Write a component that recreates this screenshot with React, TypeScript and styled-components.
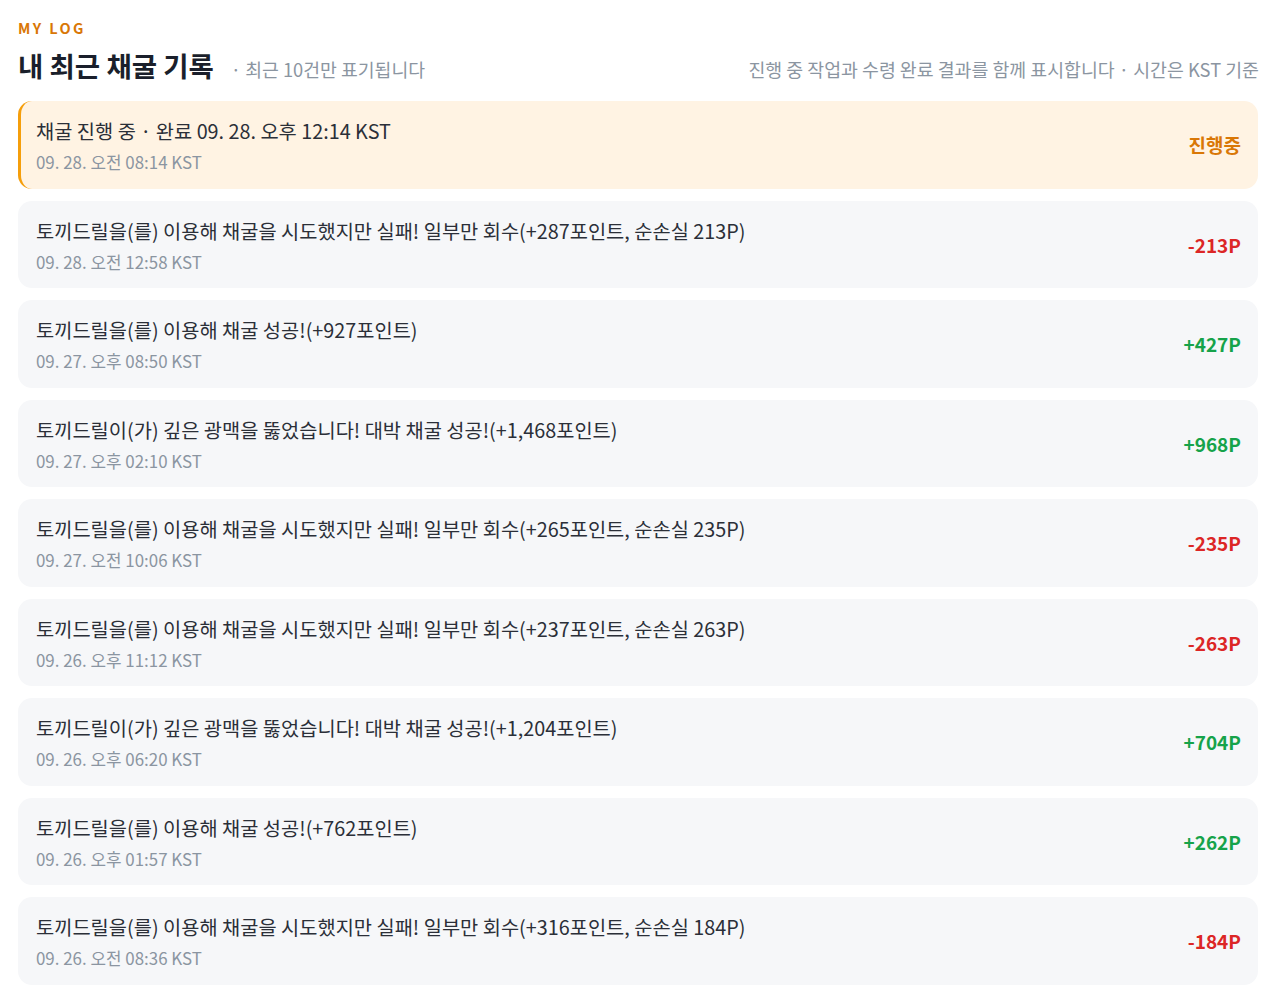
import styled, { createGlobalStyle } from 'styled-components';

const GlobalStyle = createGlobalStyle`
  body {
    margin: 0;
    background: #ffffff;
    font-family: 'Noto Sans CJK KR', 'Noto Sans', sans-serif;
    color: #1f2430;
  }
`;

const Page = styled.main`
  padding: 18px 17px 8px 18px;
`;

const Eyebrow = styled.div`
  font-size: 14.5px;
  font-weight: 700;
  letter-spacing: 2.4px;
  color: #d97706;
  line-height: 20px;
`;

const HeaderRow = styled.header`
  display: flex;
  align-items: baseline;
  justify-content: space-between;
  margin-top: 8px;
  margin-bottom: 17px;
`;

const TitleGroup = styled.div`
  display: flex;
  align-items: baseline;
  gap: 17px;
`;

const Title = styled.h1`
  margin: 0;
  font-size: 27.5px;
  font-weight: 700;
  line-height: 38px;
  color: #1a1f2b;
`;

const Hint = styled.span`
  font-size: 18.3px;
  color: #8b95a1;
`;

const Note = styled.span`
  font-size: 18.35px;
  color: #8b95a1;
  margin-right: -1px;
`;

const List = styled.ul`
  list-style: none;
  margin: 0;
  padding: 0;
  display: flex;
  flex-direction: column;
  gap: 12px;
`;

type Tone = 'pending' | 'gain' | 'loss';

const Card = styled.li<{ $active?: boolean }>`
  display: flex;
  align-items: center;
  justify-content: space-between;
  height: 87.5px;
  box-sizing: border-box;
  padding: 2px 17px 0 ${(p) => (p.$active ? '15px' : '18px')};
  border-radius: 14px;
  background: ${(p) => (p.$active ? '#fff3e3' : '#f6f7f9')};
  border-left: ${(p) => (p.$active ? '3px solid #f59e0b' : 'none')};
`;

const Body = styled.div`
  display: flex;
  flex-direction: column;
  gap: 5px;
`;

const Message = styled.div`
  font-size: 19.8px;
  line-height: 28px;
  color: #2b2f38;
`;

const Stamp = styled.div`
  font-size: 16.9px;
  line-height: 24px;
  color: #8b95a1;
`;

const toneColor: Record<Tone, string> = {
  pending: '#d97706',
  gain: '#16a34a',
  loss: '#dc2626',
};

const Amount = styled.div<{ $tone: Tone }>`
  font-size: 19px;
  font-weight: 700;
  margin-top: -2px;
  color: ${(p) => toneColor[p.$tone]};
`;

type Entry = {
  message: string;
  time: string;
  amount: string;
  tone: Tone;
  active?: boolean;
};

const entries: Entry[] = [
  { message: '채굴 진행 중 · 완료 09. 28. 오후 12:14 KST', time: '09. 28. 오전 08:14 KST', amount: '진행중', tone: 'pending', active: true },
  { message: '토끼드릴을(를) 이용해 채굴을 시도했지만 실패! 일부만 회수(+287포인트, 순손실 213P)', time: '09. 28. 오전 12:58 KST', amount: '-213P', tone: 'loss' },
  { message: '토끼드릴을(를) 이용해 채굴 성공!(+927포인트)', time: '09. 27. 오후 08:50 KST', amount: '+427P', tone: 'gain' },
  { message: '토끼드릴이(가) 깊은 광맥을 뚫었습니다! 대박 채굴 성공!(+1,468포인트)', time: '09. 27. 오후 02:10 KST', amount: '+968P', tone: 'gain' },
  { message: '토끼드릴을(를) 이용해 채굴을 시도했지만 실패! 일부만 회수(+265포인트, 순손실 235P)', time: '09. 27. 오전 10:06 KST', amount: '-235P', tone: 'loss' },
  { message: '토끼드릴을(를) 이용해 채굴을 시도했지만 실패! 일부만 회수(+237포인트, 순손실 263P)', time: '09. 26. 오후 11:12 KST', amount: '-263P', tone: 'loss' },
  { message: '토끼드릴이(가) 깊은 광맥을 뚫었습니다! 대박 채굴 성공!(+1,204포인트)', time: '09. 26. 오후 06:20 KST', amount: '+704P', tone: 'gain' },
  { message: '토끼드릴을(를) 이용해 채굴 성공!(+762포인트)', time: '09. 26. 오후 01:57 KST', amount: '+262P', tone: 'gain' },
  { message: '토끼드릴을(를) 이용해 채굴을 시도했지만 실패! 일부만 회수(+316포인트, 순손실 184P)', time: '09. 26. 오전 08:36 KST', amount: '-184P', tone: 'loss' },
];

export default function App() {
  return (
    <>
      <GlobalStyle />
      <Page>
        <Eyebrow>MY LOG</Eyebrow>
        <HeaderRow>
          <TitleGroup>
            <Title>내 최근 채굴 기록</Title>
            <Hint>· 최근 10건만 표기됩니다</Hint>
          </TitleGroup>
          <Note>진행 중 작업과 수령 완료 결과를 함께 표시합니다 · 시간은 KST 기준</Note>
        </HeaderRow>
        <List>
          {entries.map((e, i) => (
            <Card key={i} $active={e.active}>
              <Body>
                <Message>{e.message}</Message>
                <Stamp>{e.time}</Stamp>
              </Body>
              <Amount $tone={e.tone}>{e.amount}</Amount>
            </Card>
          ))}
        </List>
      </Page>
    </>
  );
}
